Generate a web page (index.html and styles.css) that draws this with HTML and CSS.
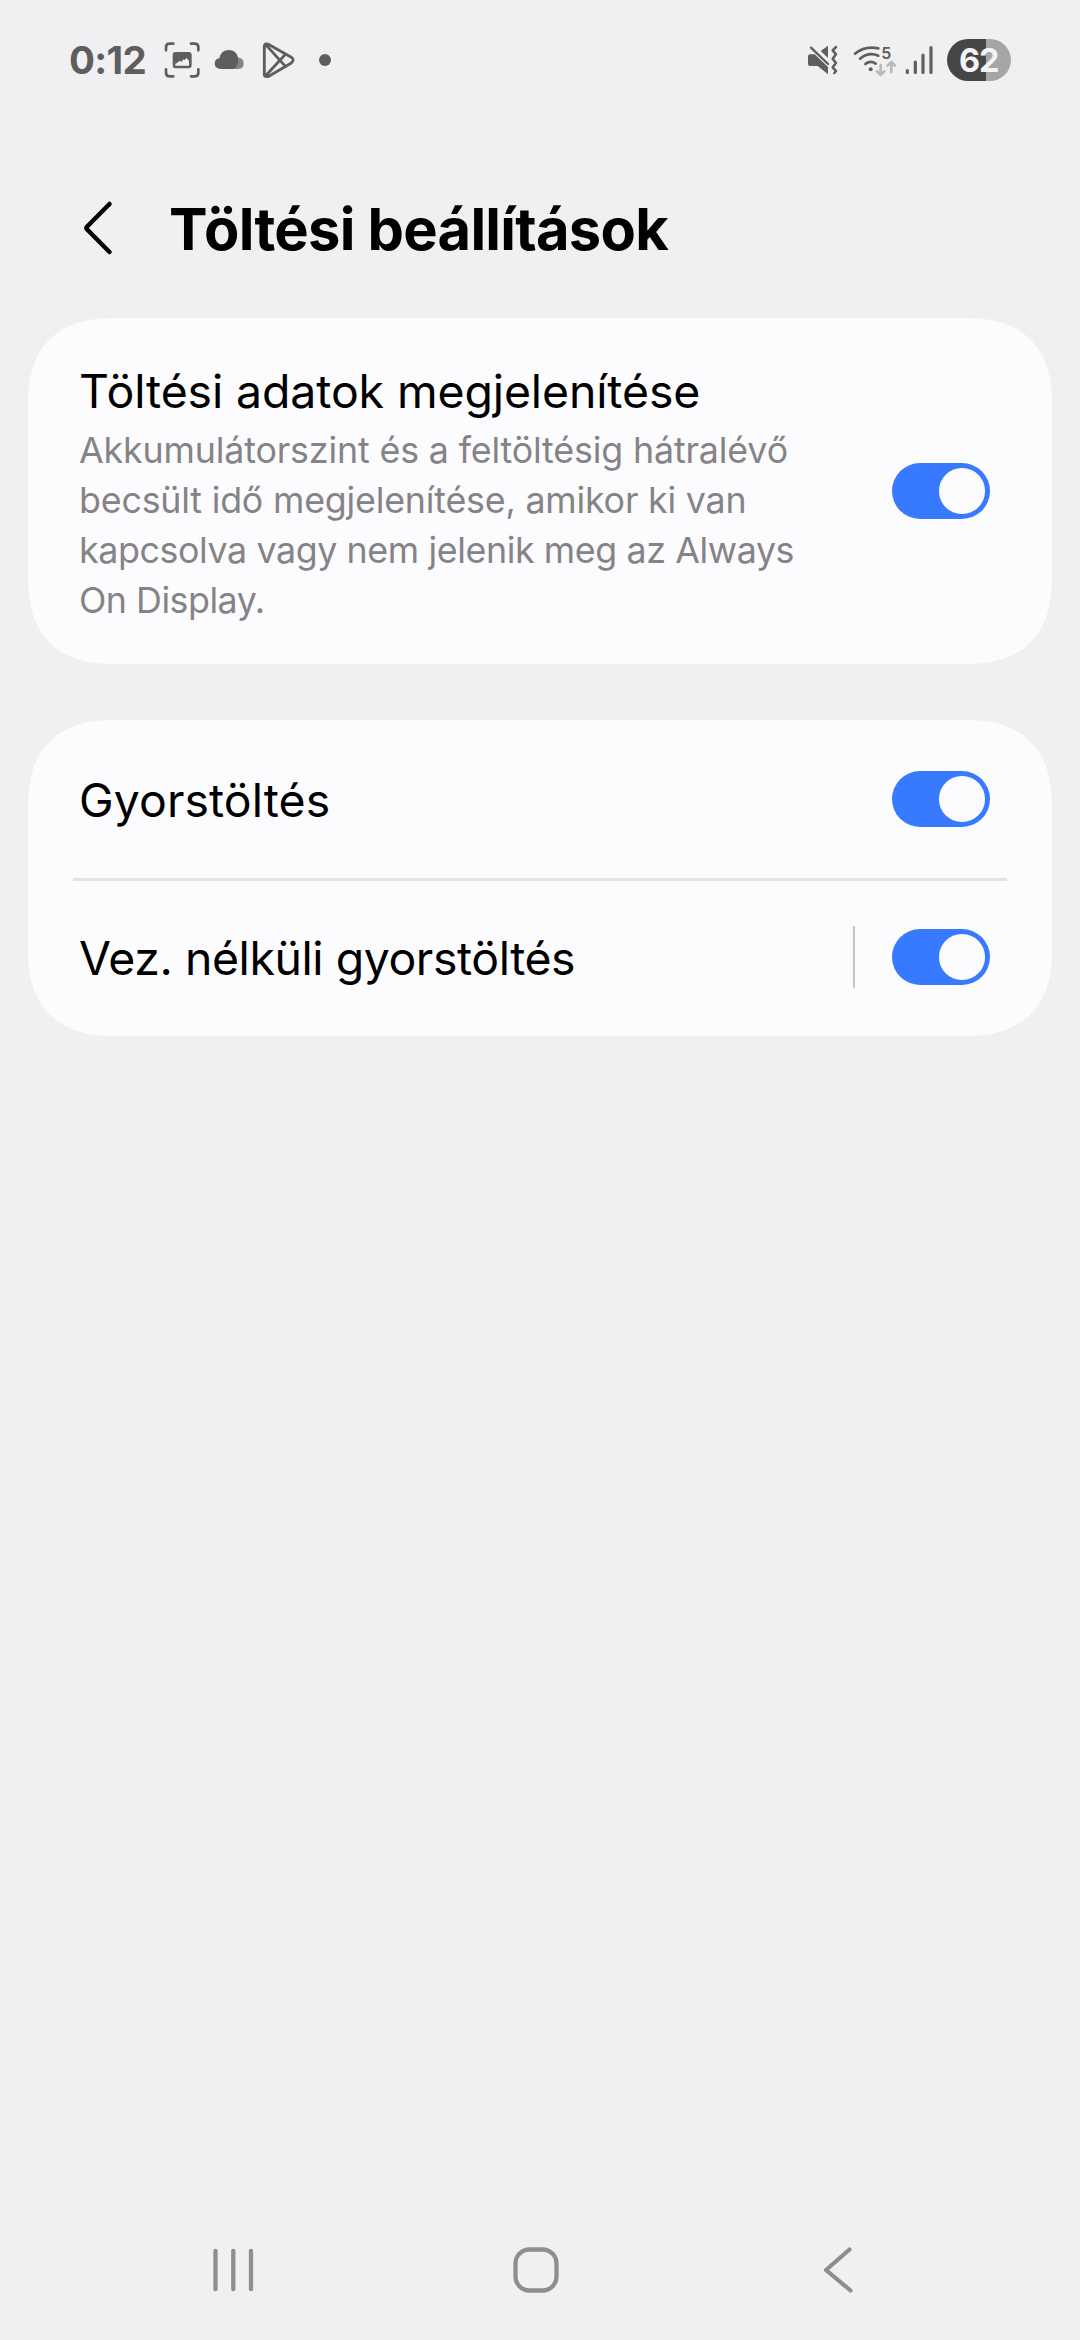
FILE: index.html
```html
<!DOCTYPE html>
<html lang="hu">
<head>
<meta charset="utf-8">
<title>Töltési beállítások</title>
<link rel="stylesheet" href="styles.css">
</head>
<body>
<div class="screen">
  <div class="status">
    <div class="status-left">
      <span class="clock">0:12</span>
      <svg class="ic" width="40" height="50" viewBox="37 0 120 150">
        <g fill="none" stroke="#5e5e5f" stroke-width="8" stroke-linecap="round"><path d="M49 46V37Q49 26 60 26H71M124 26H135Q146 26 146 37V46M49 103V113Q49 124 60 124H71M124 124H135Q146 124 146 113V103"/></g>
        <path fill="#5e5e5f" fill-rule="evenodd" d="M77 51H117Q126 51 126 60V91Q126 100 117 100H77Q69 100 69 91V60Q69 51 77 51ZM77 86V92H118V77L110 69L104 76L101 73L95 81L90 77L82 84Z"/>
      </svg>
      <svg class="ic cloud" width="34" height="50" viewBox="190 0 102 150">
        <path fill="#858586" d="M250 69Q282 62 282 86Q282 102 264 102H230Z"/>
        <path fill="#5e5e5f" d="M213 102Q195 101 195 85Q196 71 209 70Q214 45 238 45Q260 46 265 67Q269 91 252 102Z"/>
      </svg>
      <svg class="ic play" width="40" height="50" viewBox="90 0 120 150">
        <g fill="none" stroke="#5e5e5f" stroke-width="8.500" stroke-linejoin="round" stroke-linecap="round"><path d="M103 34Q103 26 110 27Q114 27 119 30L184 67Q195 75 184 84L119 122Q114 125 110 125Q103 125 103 118ZM107 29L167 95M107 122L167 57"/></g>
      </svg>
      <svg class="ic dot" width="14" height="50" viewBox="264 0 42 150"><circle cx="285" cy="75" r="18" fill="#5e5e5f"/></svg>
    </div>
    <div class="status-right">
      <svg class="ic" width="36" height="50" viewBox="18 0 108 150">
        <g fill="#5e5e5f"><path d="M30 58H44L84 96V118L53 93H30Q24 93 24 87V64Q24 58 30 58ZM62 48L84 32V69Z"/></g>
        <g fill="none" stroke="#5e5e5f" stroke-linecap="round"><path stroke-width="7" d="M33 38L84 87"/><path stroke-width="7.500" stroke-linejoin="round" d="M108 36L98 46L108 58L98 71L108 84L98 97L108 108L103 114"/></g>
      </svg>
      <svg class="ic wifi" width="46" height="50" viewBox="156 0 138 150">
        <g fill="none" stroke="#5e5e5f" stroke-width="8" stroke-linecap="round"><path d="M165 56Q195 31 235 40M180 71Q206 50 235 62M196 87Q211 75 227 86"/></g>
        <circle cx="212" cy="103" r="6" fill="#5e5e5f"/>
        <path fill="none" stroke="#b9b9bb" stroke-width="8" stroke-linecap="round" stroke-linejoin="round" d="M242 90V119M231 109L242 120L253 109M274 111V81M263 92L274 81L285 92"/>
        <text class="band" x="244" y="72">5</text>
      </svg>
      <svg class="ic signal" width="30" height="50" viewBox="343 0 90 150">
        <g stroke="#5e5e5f" stroke-width="9.500" stroke-linecap="round"><path d="M353 107V112.500M377 81V112.500M400 60V112.500M424 38V112.500"/></g>
      </svg>
      <div class="battery"><span>62</span></div>
    </div>
  </div>

  <header class="header">
    <svg width="34" height="60" viewBox="0 0 34 60"><path d="M28.500 6L6.200 28.500Q4.500 30 6.200 31.500L28.500 54" fill="none" stroke="#000" stroke-width="4.500" stroke-linecap="round" stroke-linejoin="round"/></svg>
    <h1>Töltési beállítások</h1>
  </header>

  <main>
    <section class="card info">
      <div class="text">
        <div class="label label-info">Töltési adatok megjelenítése</div>
        <p class="desc"><span class="l1">Akkumulátorszint és a feltöltésig hátralévő</span><br><span class="l2">becsült idő megjelenítése, amikor ki van</span><br><span class="l3">kapcsolva vagy nem jelenik meg az Always</span><br><span class="l4">On Display.</span></p>
      </div>
      <div class="toggle"><i></i></div>
    </section>
    <section class="card list">
      <div class="row"><div class="label label-fast">Gyorstöltés</div><div class="toggle"><i></i></div></div>
      <div class="divider"></div>
      <div class="row last"><div class="label">Vez. nélküli gyorstöltés</div><div class="bar"></div><div class="toggle"><i></i></div></div>
    </section>
  </main>

  <nav class="nav">
    <svg width="46" height="50" viewBox="0 0 46 50"><path d="M5.500 5.800V44.200M23.300 5.800V44.200M41 5.800V44.200" stroke="#8e8e8f" stroke-width="4.300" stroke-linecap="round"/></svg>
    <svg class="home" width="50" height="50" viewBox="0 0 50 50"><rect x="4.500" y="4.500" width="41" height="41" rx="14" fill="none" stroke="#8e8e8f" stroke-width="4.300"/></svg>
    <svg width="36" height="50" viewBox="0 0 36 50"><path d="M29.500 4.500L6 25L30.500 45.500" fill="none" stroke="#8e8e8f" stroke-width="4.200" stroke-linecap="round" stroke-linejoin="round"/></svg>
  </nav>
</div>
</body>
</html>
```
FILE: styles.css
```css
* { box-sizing: border-box; margin: 0; padding: 0; }
body { background: #f0f0f2; font-family: Inter, "Liberation Sans", sans-serif; color: #000; }
svg { display: block; flex: none; }
.screen { width: 1080px; height: 2340px; display: flex; flex-direction: column; }

.status { height: 120px; padding: 0 69.5px 0 69px; display: flex; justify-content: space-between; align-items: center; }
.status-left, .status-right { display: flex; align-items: center; }
.clock { width: 93px; font-size: 38.500px; font-weight: 700; line-height: 46px; letter-spacing: -.6px; color: #5e5e5f; white-space: nowrap; }
.cloud { margin-left: 11px; }
.play { margin-left: 13px; }
.dot { margin-left: 18px; }
.wifi { margin-left: 10px; }
.band { font: 600 48px Inter, sans-serif; fill: #5e5e5f; }
.signal { margin-left: 6px; }
.battery { width: 63.500px; height: 42px; margin-left: 13px; border-radius: 21px; background: linear-gradient(90deg, #464647 0 39px, #a6a6a8 39px); display: flex; align-items: center; justify-content: center; color: #f4f4f6; font-size: 32.500px; font-weight: 700; letter-spacing: -1px; }

.header { height: 198px; padding: 20px 0 0 81px; display: flex; align-items: center; }
.header svg { margin-top: -2px; }
h1 { margin-left: 54px; font-size: 57.800px; font-weight: 700; line-height: 70px; letter-spacing: -.72px; white-space: nowrap; }

main { flex: 1; padding: 0 28px; display: flex; flex-direction: column; gap: 56px; }
.card { background: #fcfcff; border-radius: 76px; }
@supports (corner-shape: superellipse(1.3)) {
  .card { border-radius: 88px; corner-shape: superellipse(1.3); }
}
.info { height: 346px; padding: 45px 62px 0 51px; display: flex; justify-content: space-between; }
.info .toggle { margin-top: 100px; }
.label { font-size: 46.400px; line-height: 56px; letter-spacing: -.42px; white-space: nowrap; }
.label-info { letter-spacing: -.1px; }
.label-fast { letter-spacing: .1px; }
.desc { margin-top: 6px; font-size: 35.800px; line-height: 50px; color: #848486; white-space: nowrap; }
.l1 { letter-spacing: -.15px; }
.l2 { letter-spacing: -.2px; }
.l3 { letter-spacing: -.4px; }
.l4 { letter-spacing: -.5px; }

.row { height: 158px; padding: 0 62px 0 51px; display: flex; align-items: center; }
.row .label { flex: 1; padding-top: 2px; }
.row.last { height: 155px; padding-bottom: 3px; }
.divider { height: 3px; margin: 0 45px; background: #e3e3e5; }
.bar { width: 2px; height: 62px; margin-right: 37px; background: #c6c6c8; }
.toggle { flex: none; width: 98px; height: 56px; padding: 5px 5.500px; border-radius: 28px; background: #387aff; display: flex; justify-content: flex-end; }
.toggle i { width: 45.500px; height: 45.500px; border-radius: 50%; background: #fcfcff; }

.nav { height: 140px; padding: 0 224px 0 210px; display: flex; justify-content: space-between; align-items: center; }
.home { margin-right: 5px; }
```
